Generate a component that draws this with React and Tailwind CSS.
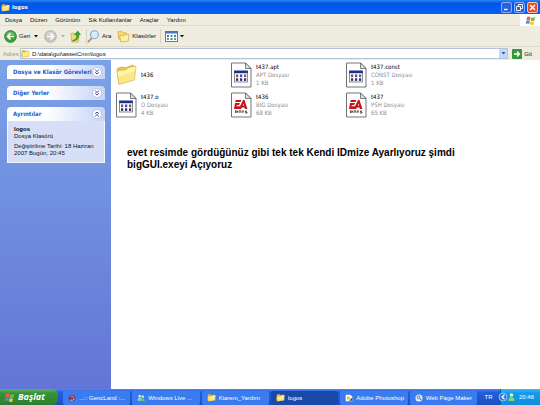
import React from "react";

function Folder({ className }) {
  return (
    <svg viewBox="0 0 20 20" className={className} aria-hidden="true">
      <path d="M2 5 L3 3 L8 3 L10 5 L16 4 L17 6 L17 16 L3 18 L1 16Z" fill="#e3b93f" stroke="#b58f2c" strokeWidth=".7" />
      <path d="M2 8 L11 7 L13 5 L19 5 L18 16 L3 18.500Z" fill="#ffe983" stroke="#c9a13a" strokeWidth=".6" />
      <path d="M3 9 L12 8 L14 6 L18 6" fill="none" stroke="#fffbd5" strokeWidth="1" />
    </svg>
  );
}

function BigFolder() {
  return (
    <svg viewBox="0 0 21 24" className="h-6 w-[21px] shrink-0" aria-hidden="true">
      <path d="M1 7 L2 5 L7 4 L9 5 L17 2 L18 4 L18 16 L3 21Z" fill="#ecc74e" stroke="#c6a043" strokeWidth=".7" />
      <path d="M1 8 L10 6.500 L12 4.500 L20 3 L18.500 17 L3 21.500Z" fill="#fce788" stroke="#d3ad4b" strokeWidth=".6" />
      <path d="M1.500 8.700 L10.500 7.200 L12.500 5.200 L19.300 3.800 L19 8 L2.300 14Z" fill="#fff4ae" />
    </svg>
  );
}

function Page({ children }) {
  return (
    <svg viewBox="0 0 21 26" className="h-[26px] w-[21px] shrink-0" aria-hidden="true">
      <path d="M.5 1 H14.500 L20 6.500 V25 H.5Z" fill="#fff" stroke="#707478" strokeWidth="1" />
      <path d="M14.500 1 V6.500 H20Z" fill="#dfe3e6" stroke="#4b4f54" strokeWidth=".7" />
      {children}
    </svg>
  );
}

function DataFile() {
  const dots = [["#a04a43", 5], ["#3c4fb4", 9], ["#8a4f4f", 13]];
  return (
    <Page>
      <rect x="3.500" y="9" width="13" height="11" fill="#f8f9ff" stroke="#6a7080" strokeWidth=".8" />
      <rect x="3.200" y="8.700" width="13.600" height="2.500" fill="#16338f" />
      {dots.map(([c, x]) => (
        <g key={x}>
          <rect x={x} y="12.500" width="2.200" height="2.600" fill={c} />
          <rect x={x} y="16.300" width="2.200" height="2.600" fill="#2b345f" />
        </g>
      ))}
    </Page>
  );
}

function EaFile() {
  return (
    <Page>
      <path d="M5 8 H10.500 L9.500 10 H4Z M4 11 H9 L8 13 H6 L5.500 14.300 H9 L12 8 H13.500 L16.500 17 H14 L13.500 15.500 H11 L10 17 H3Z M12.600 11.500 L11.800 13.500 H13.200Z" fill="#c8141c" fillRule="evenodd" />
      <path d="M4.500 18.500 V21 M4.500 19 H6.500 V20.200 H4.500 M8 21 V18.800 H10 V21 M11 19 H13 M12 19 V21 M16 19 H14.500 V20 H16 V21 H14" fill="none" stroke="#40272a" strokeWidth=".8" />
    </Page>
  );
}

function Flag({ className }) {
  return (
    <svg viewBox="0 0 16 16" className={className} aria-hidden="true">
      <path d="M3 3 Q5 1 8 3 L7 7.500 Q4.500 6 2 7.500Z" fill="#ef6433" />
      <path d="M9 3.500 Q11.500 5 15 3 L13.500 8 Q11 9.500 8 8Z" fill="#78b83d" />
      <path d="M2 8.500 Q4.500 7 7 8.500 L6 13 Q3.500 11.500 1 13Z" fill="#4a8be2" />
      <path d="M8 9 Q10.500 10.500 13.500 9 L12 14 Q9.500 15 7 13.500Z" fill="#f5c633" />
    </svg>
  );
}

function Round({ back }) {
  return (
    <svg viewBox="0 0 14 14" className="size-[13px] shrink-0" aria-hidden="true">
      <circle cx="7" cy="7" r="6.400" fill={back ? "#3aa535" : "#c6c7c3"} stroke={back ? "#26812a" : "#aeb0ac"} strokeWidth=".8" />
      <path d="M2 5 Q6 -1 12 5 Q7 5 2 5" fill="#fff" opacity=".3" />
      <path d={back ? "M11 7 H4 M7 3.700 L3.700 7 L7 10.300" : "M3 7 H10 M7 3.700 L10.300 7 L7 10.300"} fill="none" stroke="#fff" strokeWidth="1.700" />
    </svg>
  );
}

function Caret({ className }) {
  return (
    <svg viewBox="0 0 4 3" className={className} aria-hidden="true">
      <path d="M0 0 H4 L2 2.500Z" fill="currentColor" />
    </svg>
  );
}

function Chevrons({ up }) {
  return (
    <svg viewBox="0 0 10 10" className="size-[10px] shrink-0" aria-hidden="true">
      <circle cx="5" cy="5" r="4.500" fill="#fff" stroke="#a9b7dc" strokeWidth=".7" />
      <path d={up ? "M3.200 4.700 L5 3 L6.800 4.700 M3.200 7.200 L5 5.500 L6.800 7.200" : "M3.200 2.800 L5 4.500 L6.800 2.800 M3.200 5.300 L5 7 L6.800 5.300"} fill="none" stroke="#2f4384" strokeWidth="1" />
    </svg>
  );
}

function Panel({ title, open, children }) {
  return (
    <section>
      <button className="flex h-[14px] w-full items-center justify-between rounded-t-sm bg-linear-to-r from-white from-40% to-[#c6d3f7] pr-[3px] pl-[6px] font-['DejaVu_Sans_Condensed','DejaVu_Sans',sans-serif] text-[6px] font-bold whitespace-nowrap text-[#2b5bc7]" aria-expanded={Boolean(open)}>
        {title}
        <Chevrons up={open} />
      </button>
      {children}
    </section>
  );
}

const files = [
  { name: "t436", icon: BigFolder },
  { name: "t437.apt", type: "APT Dosyası", size: "1 KB", icon: DataFile },
  { name: "t437.const", type: "CONST Dosyası", size: "1 KB", icon: DataFile },
  { name: "t437.o", type: "O Dosyası", size: "4 KB", icon: DataFile },
  { name: "t436", type: "BIG Dosyası", size: "68 KB", icon: EaFile },
  { name: "t437", type: "PSH Dosyası", size: "65 KB", icon: EaFile },
];

function Globe() {
  return (
    <svg viewBox="0 0 12 12" className="size-[8px] shrink-0" aria-hidden="true">
      <circle cx="6" cy="6" r="5" fill="#6b315f" />
      <path d="M2 4 Q6 0 10 4 L8 7 L4 5Z" fill="#d75a58" />
      <path d="M3 9 Q7 11 10 7" fill="none" stroke="#b9c9f5" strokeWidth="1.500" />
    </svg>
  );
}

function People() {
  return (
    <svg viewBox="0 0 12 12" className="size-[8px] shrink-0" aria-hidden="true">
      <circle cx="4" cy="3" r="2" fill="#c2ecff" />
      <path d="M1 10 Q1 5 4 5 Q7 5 7 10Z" fill="#8bd0ee" />
      <circle cx="8.500" cy="4" r="2" fill="#c9f0a0" />
      <path d="M5.500 11 Q5.500 6.500 8.500 6.500 Q11.500 6.500 11.500 11Z" fill="#71c34c" />
    </svg>
  );
}

function PhotoDoc() {
  return (
    <svg viewBox="0 0 12 12" className="size-[8px] shrink-0" aria-hidden="true">
      <path d="M1 1 H8 L11 4 V11 H1Z" fill="#fff" />
      <circle cx="5" cy="6" r="2.500" fill="#f1bd3a" />
      <path d="M6 10 L11 5 V10Z" fill="#3f5a38" />
    </svg>
  );
}

function Maker() {
  return (
    <svg viewBox="0 0 12 12" className="size-[8px] shrink-0" aria-hidden="true">
      <circle cx="6" cy="6" r="5.300" fill="#e5f0ff" />
      <circle cx="5.500" cy="5" r="2.200" fill="none" stroke="#32599d" strokeWidth="1.200" />
      <path d="M7 6.500 L10 9.500" stroke="#32599d" strokeWidth="1.500" />
    </svg>
  );
}

function SmallFolder() {
  return <Folder className="size-[9px] shrink-0" />;
}

const tasks = [
  { label: "...:: GencLand :...", icon: Globe },
  { label: "Windows Live ...", icon: People },
  { label: "Kiarem_Yardım", icon: SmallFolder },
  { label: "logos", icon: SmallFolder, active: true },
  { label: "Adobe Photoshop", icon: PhotoDoc },
  { label: "Web Page Maker", icon: Maker },
];

function Caption({ label, red, children }) {
  return (
    <button aria-label={label} className={red ? "size-[11px] rounded-xs border border-[#f3c5b8] bg-[#e0512c]" : "size-[11px] rounded-xs border border-[#89aef5] bg-[#2c62dc]"}>
      <svg viewBox="0 0 9 9" className="size-[9px]" fill="none" stroke="#fff" aria-hidden="true">{children}</svg>
    </button>
  );
}

export default function App() {
  return (
    <div className="flex h-screen flex-col overflow-hidden bg-white font-['Liberation_Sans',sans-serif] text-[6px] leading-[8px] text-[#111]">
      <header className="flex h-[14px] shrink-0 items-center bg-linear-to-b from-[#2b83f5] via-[#0055e5] via-25% to-[#0560f5] pr-[2px] pl-[1px] text-white">
        <Folder className="size-[9px]" />
        <h1 className="ml-[2px] flex-1 font-['Open_Sans',sans-serif] text-[6px] font-bold">logos</h1>
        <div className="flex gap-[2px]">
          <Caption label="Simge durumuna küçült"><path d="M2 6.500 H5.500" strokeWidth="1.400" /></Caption>
          <Caption label="Önceki boyut"><path d="M3.500 3.500 V1.500 H7.500 V5.500 H5.500 M1.500 3.500 H5.500 V7.500 H1.500Z" strokeWidth=".9" /></Caption>
          <Caption label="Kapat" red><path d="M2 2 L7 7 M7 2 L2 7" strokeWidth="1.400" /></Caption>
        </div>
      </header>

      <nav className="flex h-[12px] shrink-0 bg-[#efede0]">
        <div className="flex flex-1 items-center gap-[8px] border-b border-[#dedbca] pl-[5px]">
          {["Dosya", "Düzen", "Görünüm", "Sık Kullanılanlar", "Araçlar", "Yardım"].map((m) => (
            <button key={m}>{m}</button>
          ))}
        </div>
        <div className="flex w-[20px] items-center justify-center bg-white">
          <Flag className="size-[11px]" />
        </div>
      </nav>

      <div className="flex h-[21px] shrink-0 items-center border-b border-[#dcd9c8] bg-[#efede0] pl-[4px]">
        <button className="flex w-[26px] items-center gap-[2px]"><Round back />Geri</button>
        <Caret className="ml-[4px] h-[3px] w-[4px]" />
        <button className="ml-[6px]" aria-label="İleri"><Round /></button>
        <Caret className="ml-[4px] h-[3px] w-[4px] text-[#b5b3a8]" />
        <button className="ml-[4px]" aria-label="Yukarı">
          <svg viewBox="0 0 14 14" className="size-[13px]" aria-hidden="true">
            <path d="M2 4 L5 3 L6 4 L10 3 L11 5 L10 13 L3 13Z" fill="#f5dc72" stroke="#c9a742" strokeWidth=".7" />
            <path d="M4 11 Q9 10 8 5 H5.500 L9.500 1 L12.500 5 H10.500 Q11 11 4 12Z" fill="#38a531" stroke="#2a7b28" strokeWidth=".4" />
          </svg>
        </button>
        <div className="ml-[4px] h-[15px] w-px bg-[#d6d3c3]" />
        <button className="flex items-center gap-[2px]">
          <svg viewBox="0 0 14 14" className="size-[13px]" aria-hidden="true">
            <path d="M5.500 8.500 L1 13" stroke="#c08a5a" strokeWidth="2" />
            <circle cx="8" cy="5" r="4.300" fill="#d3eafc" stroke="#7fa7cf" strokeWidth="1.100" />
            <path d="M6 4 Q7 2 9 2.500" fill="none" stroke="#fff" />
          </svg>
          Ara
        </button>
        <button className="ml-[6px] flex items-center gap-[2px]">
          <svg viewBox="0 0 14 14" className="size-[13px]" aria-hidden="true">
            <path d="M1 2 L5 1 L6 3 L10 3 V9 L2 10Z" fill="#f8dc70" stroke="#caa33d" strokeWidth=".7" />
            <path d="M3 6 L8 6 L9 4.500 L13 5 L12 12 L4 13Z" fill="#fff0a0" stroke="#caa33d" strokeWidth=".7" />
          </svg>
          Klasörler
        </button>
        <div className="ml-[4px] h-[15px] w-px bg-[#d6d3c3]" />
        <button className="ml-[4px] flex items-center gap-[2px]" aria-label="Görünümler">
          <svg viewBox="0 0 13 11" className="h-[11px] w-[13px]" aria-hidden="true">
            <rect x=".5" y=".5" width="12" height="10" fill="#fff" stroke="#4b80c5" />
            <rect width="13" height="2.500" fill="#3e77cb" />
            <path d="M2 5 H4 M9 5 H11 M5.500 8 H7.500" stroke="#467bc0" strokeWidth="1.800" />
            <path d="M5.500 5 H7.500 M2 8 H4 M9 8 H11" stroke="#59a36c" strokeWidth="1.800" />
          </svg>
          <Caret className="h-[3px] w-[4px]" />
        </button>
      </div>

      <div className="flex h-[13px] shrink-0 items-center bg-[#efede0] pr-[8px] pl-[3px]">
        <label htmlFor="address" className="w-[17px] text-[#98968b]">Adres</label>
        <div className="flex h-[11px] flex-1 items-center border border-[#b3c3d8] bg-white">
          <Folder className="size-[9px]" />
          <input id="address" defaultValue="D:\data\gui\assetCmn\logos" className="ml-[2px] h-[9px] min-w-0 flex-1 bg-transparent leading-[8px] outline-none" />
          <button aria-label="Adres listesi" className="flex h-[9px] w-[8px] items-center justify-center bg-[#c5d6fb] text-[#3e5791]">
            <Caret className="h-[3px] w-[5px]" />
          </button>
        </div>
        <button className="ml-[4px] flex items-center gap-[2px]">
          <svg viewBox="0 0 10 10" className="size-[10px]" aria-hidden="true">
            <rect width="10" height="10" rx="1" fill="#35983c" />
            <path d="M2 5 H7 M5 2.500 L7.500 5 L5 7.500" fill="none" stroke="#fff" strokeWidth="1.300" />
          </svg>
          Git
        </button>
      </div>

      <div className="flex min-h-0 flex-1">
        <aside className="flex w-[111px] shrink-0 flex-col gap-[7px] bg-linear-to-b from-[#7ba2e7] to-[#6375d6] pt-[5px] pr-[6px] pl-[7px]">
          <Panel title="Dosya ve Klasör Görevleri" />
          <Panel title="Diğer Yerler" />
          <Panel title="Ayrıntılar" open>
            <div className="border border-t-0 border-white/70 bg-[#d6dff7] px-[6px] pt-[5px] pb-[5px] leading-[7px] whitespace-nowrap">
              <p className="font-bold text-black">logos</p>
              <p>Dosya Klasörü</p>
              <p className="mt-[3px]">Değiştirilme Tarihi: 18 Haziran</p>
              <p>2007 Bugün, 20:45</p>
            </div>
          </Panel>
        </aside>
        <main className="min-w-0 flex-1 pt-px pl-[5px]">
          <ul className="grid grid-cols-[repeat(3,115px)] gap-y-[2px] font-['DejaVu_Sans_Condensed','DejaVu_Sans',sans-serif]">
            {files.map(({ name, type, size, icon: Icon }) => (
              <li key={name + type} className="flex h-7 items-center gap-[4px] leading-[8px]">
                <Icon />
                <div>
                  <p className="text-black">{name}</p>
                  {type && <p className="text-[#8d8d8d]">{type}</p>}
                  {size && <p className="text-[#8d8d8d]">{size}</p>}
                </div>
              </li>
            ))}
          </ul>
          <p className="mt-[28px] pl-[11px] font-['Liberation_Sans',sans-serif] text-[10px] leading-[12px] font-bold text-black">
            evet resimde gördüğünüz gibi tek tek Kendi IDmize Ayarlıyoruz şimdi
            <br />
            bigGUI.exeyi Açıyoruz
          </p>
        </main>
      </div>

      <footer className="flex h-[16px] shrink-0 items-stretch bg-linear-to-b from-[#4a8af2] via-[#245edb] via-20% to-[#1e4fc0] text-white">
        <button className="flex w-[58px] items-center gap-[3px] rounded-r-md bg-linear-to-b from-[#63ae62] via-[#389438] via-25% to-[#2d7c2d] pl-[4px] font-['Open_Sans',sans-serif] text-[9px] font-bold italic">
          <Flag className="size-[11px]" />
          Başlat
        </button>
        <div className="ml-[5px] flex min-w-0 flex-1 items-center gap-[2px] pt-px">
          {tasks.map(({ label, icon: Icon, active }) => (
            <button key={label} className={active ? "flex h-[14px] min-w-0 flex-1 items-center gap-[3px] rounded-xs bg-[#1b48ab] pl-[5px] whitespace-nowrap" : "flex h-[14px] min-w-0 flex-1 items-center gap-[3px] rounded-xs bg-[#3b7bf0] pl-[5px] whitespace-nowrap"}>
              <Icon />
              {label}
            </button>
          ))}
        </div>
        <button className="w-[23px]">TR</button>
        <div className="flex w-[40px] items-center justify-end gap-[3px] border-l border-[#0b5fb5] bg-linear-to-b from-[#3cb8f5] via-[#129aea] via-25% to-[#0f8ddd] pr-[6px]">
          <svg viewBox="0 0 18 10" className="-ml-[5px] h-[10px] w-[18px] shrink-0" aria-hidden="true">
            <circle cx="5" cy="5" r="4" fill="#2b78e4" stroke="#a9d2fa" strokeWidth=".8" />
            <path d="M6.500 2.800 L4 5 L6.500 7.200" fill="none" stroke="#fff" strokeWidth="1.300" />
            <circle cx="13.500" cy="3" r="1.800" fill="#e3f5b0" />
            <path d="M10.500 9 Q10.500 5 13.500 5 Q16.500 5 16.500 9Z" fill="#8fd35b" />
          </svg>
          <time>20:46</time>
        </div>
      </footer>
    </div>
  );
}
